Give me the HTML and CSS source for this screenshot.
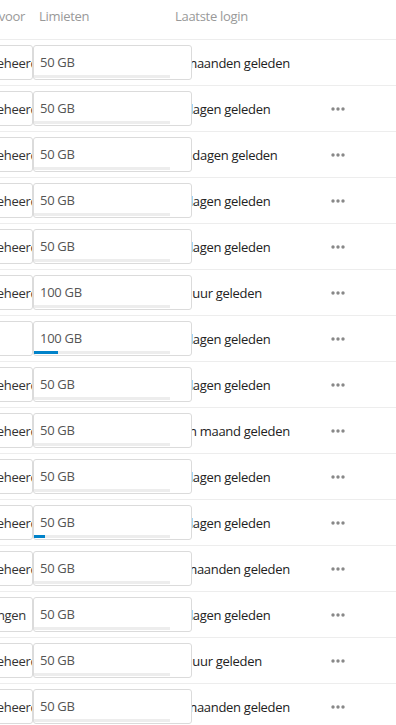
FILE: index.html
```html
<!DOCTYPE html>
<html lang="nl">
<head>
<meta charset="utf-8">
<title>Gebruikers</title>
<link rel="stylesheet" href="styles.css">
</head>
<body>
<div class="viewport">
  <div class="table">
    <div class="row head">
      <div class="c-grp">Groepsbeheerder voor</div>
      <div class="c-quota">Limieten</div>
      <div class="c-login">Laatste login</div>
      <div class="c-act"></div>
    </div>

    <div class="row">
      <div class="c-grp"><div class="grp"><span class="clip">Groepsbeheerders</span></div></div>
      <div class="c-quota"><div class="quota"><span class="qv">50 GB</span><div class="bar"><div class="fill" style="width:0px"></div></div></div></div>
      <div class="c-login">2 maanden geleden</div>
      <div class="c-act"></div>
    </div>

    <div class="row">
      <div class="c-grp"><div class="grp"><span class="clip">Groepsbeheerders</span></div></div>
      <div class="c-quota"><div class="quota"><span class="qv">50 GB</span><div class="bar"><div class="fill" style="width:0px"></div></div></div></div>
      <div class="c-login">3 dagen geleden</div>
      <div class="c-act"><svg class="dots" width="14" height="4" viewBox="0 0 14 4"><circle cx="2" cy="2" r="1.7"/><circle cx="7" cy="2" r="1.7"/><circle cx="12" cy="2" r="1.7"/></svg></div>
    </div>

    <div class="row">
      <div class="c-grp"><div class="grp"><span class="clip">Groepsbeheerders</span></div></div>
      <div class="c-quota"><div class="quota"><span class="qv">50 GB</span><div class="bar"><div class="fill" style="width:0px"></div></div></div></div>
      <div class="c-login">14 dagen geleden</div>
      <div class="c-act"><svg class="dots" width="14" height="4" viewBox="0 0 14 4"><circle cx="2" cy="2" r="1.7"/><circle cx="7" cy="2" r="1.7"/><circle cx="12" cy="2" r="1.7"/></svg></div>
    </div>

    <div class="row">
      <div class="c-grp"><div class="grp"><span class="clip">Groepsbeheerders</span></div></div>
      <div class="c-quota"><div class="quota"><span class="qv">50 GB</span><div class="bar"><div class="fill" style="width:0px"></div></div></div></div>
      <div class="c-login">5 dagen geleden</div>
      <div class="c-act"><svg class="dots" width="14" height="4" viewBox="0 0 14 4"><circle cx="2" cy="2" r="1.7"/><circle cx="7" cy="2" r="1.7"/><circle cx="12" cy="2" r="1.7"/></svg></div>
    </div>

    <div class="row">
      <div class="c-grp"><div class="grp"><span class="clip">Groepsbeheerders</span></div></div>
      <div class="c-quota"><div class="quota"><span class="qv">50 GB</span><div class="bar"><div class="fill" style="width:0px"></div></div></div></div>
      <div class="c-login">6 dagen geleden</div>
      <div class="c-act"><svg class="dots" width="14" height="4" viewBox="0 0 14 4"><circle cx="2" cy="2" r="1.7"/><circle cx="7" cy="2" r="1.7"/><circle cx="12" cy="2" r="1.7"/></svg></div>
    </div>

    <div class="row">
      <div class="c-grp"><div class="grp"><span class="clip">Groepsbeheerders</span></div></div>
      <div class="c-quota"><div class="quota"><span class="qv">100 GB</span><div class="bar"><div class="fill" style="width:0px"></div></div></div></div>
      <div class="c-login">21 uur geleden</div>
      <div class="c-act"><svg class="dots" width="14" height="4" viewBox="0 0 14 4"><circle cx="2" cy="2" r="1.7"/><circle cx="7" cy="2" r="1.7"/><circle cx="12" cy="2" r="1.7"/></svg></div>
    </div>

    <div class="row">
      <div class="c-grp"><div class="grp"></div></div>
      <div class="c-quota"><div class="quota"><span class="qv">100 GB</span><div class="bar"><div class="fill" style="width:24px"></div></div></div></div>
      <div class="c-login">4 dagen geleden</div>
      <div class="c-act"><svg class="dots" width="14" height="4" viewBox="0 0 14 4"><circle cx="2" cy="2" r="1.7"/><circle cx="7" cy="2" r="1.7"/><circle cx="12" cy="2" r="1.7"/></svg></div>
    </div>

    <div class="row">
      <div class="c-grp"><div class="grp"><span class="clip">Groepsbeheerders</span></div></div>
      <div class="c-quota"><div class="quota"><span class="qv">50 GB</span><div class="bar"><div class="fill" style="width:0px"></div></div></div></div>
      <div class="c-login">2 dagen geleden</div>
      <div class="c-act"><svg class="dots" width="14" height="4" viewBox="0 0 14 4"><circle cx="2" cy="2" r="1.7"/><circle cx="7" cy="2" r="1.7"/><circle cx="12" cy="2" r="1.7"/></svg></div>
    </div>

    <div class="row">
      <div class="c-grp"><div class="grp"><span class="clip">Groepsbeheerders</span></div></div>
      <div class="c-quota"><div class="quota"><span class="qv">50 GB</span><div class="bar"><div class="fill" style="width:0px"></div></div></div></div>
      <div class="c-login">een maand geleden</div>
      <div class="c-act"><svg class="dots" width="14" height="4" viewBox="0 0 14 4"><circle cx="2" cy="2" r="1.7"/><circle cx="7" cy="2" r="1.7"/><circle cx="12" cy="2" r="1.7"/></svg></div>
    </div>

    <div class="row">
      <div class="c-grp"><div class="grp"><span class="clip">Groepsbeheerders</span></div></div>
      <div class="c-quota"><div class="quota"><span class="qv">50 GB</span><div class="bar"><div class="fill" style="width:0px"></div></div></div></div>
      <div class="c-login">8 dagen geleden</div>
      <div class="c-act"><svg class="dots" width="14" height="4" viewBox="0 0 14 4"><circle cx="2" cy="2" r="1.7"/><circle cx="7" cy="2" r="1.7"/><circle cx="12" cy="2" r="1.7"/></svg></div>
    </div>

    <div class="row">
      <div class="c-grp"><div class="grp"><span class="clip">Groepsbeheerders</span></div></div>
      <div class="c-quota"><div class="quota"><span class="qv">50 GB</span><div class="bar"><div class="fill" style="width:11px"></div></div></div></div>
      <div class="c-login">3 dagen geleden</div>
      <div class="c-act"><svg class="dots" width="14" height="4" viewBox="0 0 14 4"><circle cx="2" cy="2" r="1.7"/><circle cx="7" cy="2" r="1.7"/><circle cx="12" cy="2" r="1.7"/></svg></div>
    </div>

    <div class="row">
      <div class="c-grp"><div class="grp"><span class="clip">Groepsbeheerders</span></div></div>
      <div class="c-quota"><div class="quota"><span class="qv">50 GB</span><div class="bar"><div class="fill" style="width:0px"></div></div></div></div>
      <div class="c-login">2 maanden geleden</div>
      <div class="c-act"><svg class="dots" width="14" height="4" viewBox="0 0 14 4"><circle cx="2" cy="2" r="1.7"/><circle cx="7" cy="2" r="1.7"/><circle cx="12" cy="2" r="1.7"/></svg></div>
    </div>

    <div class="row">
      <div class="c-grp"><div class="grp"><span>Instellingen</span></div></div>
      <div class="c-quota"><div class="quota"><span class="qv">50 GB</span><div class="bar"><div class="fill" style="width:0px"></div></div></div></div>
      <div class="c-login">7 dagen geleden</div>
      <div class="c-act"><svg class="dots" width="14" height="4" viewBox="0 0 14 4"><circle cx="2" cy="2" r="1.7"/><circle cx="7" cy="2" r="1.7"/><circle cx="12" cy="2" r="1.7"/></svg></div>
    </div>

    <div class="row">
      <div class="c-grp"><div class="grp"><span class="clip">Groepsbeheerders</span></div></div>
      <div class="c-quota"><div class="quota"><span class="qv">50 GB</span><div class="bar"><div class="fill" style="width:0px"></div></div></div></div>
      <div class="c-login">21 uur geleden</div>
      <div class="c-act"><svg class="dots" width="14" height="4" viewBox="0 0 14 4"><circle cx="2" cy="2" r="1.7"/><circle cx="7" cy="2" r="1.7"/><circle cx="12" cy="2" r="1.7"/></svg></div>
    </div>

    <div class="row">
      <div class="c-grp"><div class="grp"><span class="clip">Groepsbeheerders</span></div></div>
      <div class="c-quota"><div class="quota"><span class="qv">50 GB</span><div class="bar"><div class="fill" style="width:0px"></div></div></div></div>
      <div class="c-login">3 maanden geleden</div>
      <div class="c-act"><svg class="dots" width="14" height="4" viewBox="0 0 14 4"><circle cx="2" cy="2" r="1.7"/><circle cx="7" cy="2" r="1.7"/><circle cx="12" cy="2" r="1.7"/></svg></div>
    </div>
  </div>
</div>
</body>
</html>
```

FILE: styles.css
```css
html, body {
  margin: 0;
  padding: 0;
  background: #fff;
}

body {
  font-family: "Open Sans", "Noto Sans", sans-serif;
  font-size: 13px;
  letter-spacing: -0.3px;
  color: #222;
}

.viewport {
  width: 396px;
  height: 725px;
  overflow: hidden;
}

.table {
  width: 600px;
  margin-left: -170px;
}

.row {
  display: flex;
  align-items: center;
  height: 45px;
  border-bottom: 1px solid #ededed;
  line-height: 18px;
  white-space: nowrap;
}

.row.head {
  height: 33px;
  padding-top: 6px;
  align-items: flex-start;
  line-height: 20px;
  color: #999;
}

.c-grp {
  flex: none;
  width: 203px;
  display: flex;
  justify-content: flex-end;
  box-sizing: border-box;
}

.head .c-grp {
  padding-right: 8px;
}

.c-quota {
  flex: none;
  width: 142px;
  box-sizing: border-box;
}

.head .c-quota {
  padding-left: 6px;
}

.c-login {
  flex: none;
  width: 156px;
}

.c-act {
  flex: none;
  width: 44px;
  display: flex;
  align-items: center;
}

.grp {
  flex: 1;
  margin-left: 10px;
  height: 35px;
  box-sizing: border-box;
  border: 1px solid #dbdbdb;
  border-radius: 3px;
  background: #fff;
  display: flex;
  align-items: center;
  justify-content: flex-end;
  padding-right: 6px;
  overflow: hidden;
  color: #333;
}

.grp .clip {
  margin-right: -30px;
}

.quota {
  position: relative;
  z-index: 1;
  width: 159px;
  height: 35px;
  box-sizing: border-box;
  border: 1px solid #dbdbdb;
  border-radius: 3px;
  background: #fff;
  display: flex;
  flex-direction: column;
  padding-bottom: 1px;
}

.qv {
  flex: 1;
  display: flex;
  align-items: center;
  padding-left: 6px;
  padding-top: 2px;
  color: #555;
}

.bar {
  width: 136px;
  height: 3px;
  background: #ededed;
}

.fill {
  height: 100%;
  background: #0082c9;
}

.dots {
  display: block;
  fill: #888;
}
```
